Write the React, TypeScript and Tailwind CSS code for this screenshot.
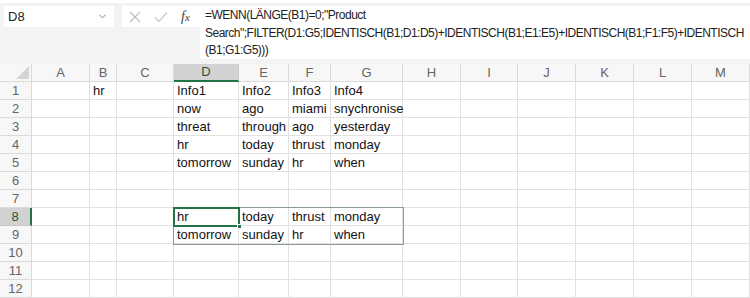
import { ChevronDown } from "lucide-react";

const cols = ["A", "B", "C", "D", "E", "F", "G", "H", "I", "J", "K", "L", "M"];

const data: Record<string, string> = {
  B1: "hr",
  D1: "Info1",
  E1: "Info2",
  F1: "Info3",
  G1: "Info4",
  D2: "now",
  E2: "ago",
  F2: "miami",
  G2: "snychronise",
  D3: "threat",
  E3: "through",
  F3: "ago",
  G3: "yesterday",
  D4: "hr",
  E4: "today",
  F4: "thrust",
  G4: "monday",
  D5: "tomorrow",
  E5: "sunday",
  F5: "hr",
  G5: "when",
  D8: "hr",
  E8: "today",
  F8: "thrust",
  G8: "monday",
  D9: "tomorrow",
  E9: "sunday",
  F9: "hr",
  G9: "when",
};

function FormulaBar() {
  return (
    <div className="flex h-[64px] bg-[#f3f3f3] border-t-[3px] border-white pt-[3px] pl-1">
      {/* name box */}
      <div className="flex h-[21px] w-[110px] shrink-0 items-center justify-between bg-white pl-1 pr-1.5 text-[13px] text-[#222]">
        <span>D8</span>
        <ChevronDown size={11} strokeWidth={2} className="text-[#777]" />
      </div>
      {/* cancel / enter / fx */}
      <div className="ml-2 flex h-[21px] w-[78px] shrink-0 items-center bg-white">
        <svg width="14" height="14" viewBox="0 0 14 14" className="ml-[6px]">
          <path d="M2 2L12 12M12 2L2 12" stroke="#bdbdbd" strokeWidth="1.2" />
        </svg>
        <svg width="16" height="14" viewBox="0 0 16 14" className="ml-[11px]">
          <path d="M2 7.5L6 11.5L14 2.5" stroke="#c6c6c6" strokeWidth="1.2" fill="none" />
        </svg>
        <span className="ml-[12px] font-['Liberation_Serif',serif] text-[14px] italic text-[#444]">
          f<span className="text-[11px]">x</span>
        </span>
      </div>
      {/* formula text */}
      <div className="h-[53px] min-w-0 flex-1 overflow-hidden whitespace-pre bg-white pl-[5px] pt-[1px] text-[12px] leading-[17.5px] tracking-[-0.5px] text-[#222]">
        {'=WENN(LÄNGE(B1)=0;"Product'}
        <br />
        {'Search";FILTER(D1:G5;IDENTISCH(B1;D1:D5)+IDENTISCH(B1;E1:E5)+IDENTISCH(B1;F1:F5)+IDENTISCH'}
        <br />
        {"(B1;G1:G5)))"}
      </div>
    </div>
  );
}

function Grid() {
  const rows = Array.from({ length: 12 }, (_, i) => i + 1);
  return (
    <div className="relative">
      <div className="grid grid-cols-[32px_58px_27px_57px_65px_50px_42px_72px_58px_57px_58px_58px_58px_58px] auto-rows-[18px] bg-white">
        {/* header row */}
        <div className="flex items-end justify-end border-r border-b border-[#dadada] bg-[#f7f7f7] pr-[2px] pb-[2px]">
          <svg width="13" height="13" viewBox="0 0 13 13">
            <path d="M13 0L13 13L0 13Z" fill="#d4d4d4" />
          </svg>
        </div>
        {cols.map((c) =>
          c === "D" ? (
            <div
              key={c}
              className="flex items-center justify-center border-r border-[#c8c8c8] border-b-2 border-b-[#217346] bg-[#d2d2d2] text-[13px] text-[#1e5c38]"
            >
              {c}
            </div>
          ) : (
            <div
              key={c}
              className="flex items-center justify-center border-r border-b border-[#dadada] bg-[#f7f7f7] text-[13px] text-[#666]"
            >
              {c}
            </div>
          )
        )}
        {rows.map((r) => [
          r === 8 ? (
            <div
              key={`h${r}`}
              className="flex items-center justify-center border-b border-[#c8c8c8] border-r-2 border-r-[#217346] bg-[#d2d2d2] text-[13px] text-[#1e5c38]"
            >
              {r}
            </div>
          ) : (
            <div
              key={`h${r}`}
              className="flex items-center justify-center border-r border-b border-[#dadada] bg-[#f7f7f7] text-[13px] text-[#666]"
            >
              {r}
            </div>
          ),
          ...cols.map((c) => (
            <div
              key={`${c}${r}`}
              className="flex items-center overflow-visible whitespace-nowrap border-r border-b border-[#e1e1e1] pl-[3px] text-[13px] text-[#111]"
            >
              {data[`${c}${r}`] ?? ""}
            </div>
          )),
        ])}
      </div>
      {/* selected range D8:G9 */}
      <div className="pointer-events-none absolute left-[173px] top-[143px] h-[38px] w-[231px] border border-[#8b9a92]" />
      {/* active cell D8 */}
      <div className="pointer-events-none absolute left-[173px] top-[143px] h-[20px] w-[67px] border-2 border-[#217346]" />
      <div className="pointer-events-none absolute left-[237px] top-[160px] h-[5px] w-[5px] border border-white bg-[#217346]" />
    </div>
  );
}

export default function App() {
  return (
    <div className="h-[298px] w-[750px] overflow-hidden bg-white font-['Liberation_Sans',Arial,sans-serif]">
      <FormulaBar />
      <Grid />
    </div>
  );
}
